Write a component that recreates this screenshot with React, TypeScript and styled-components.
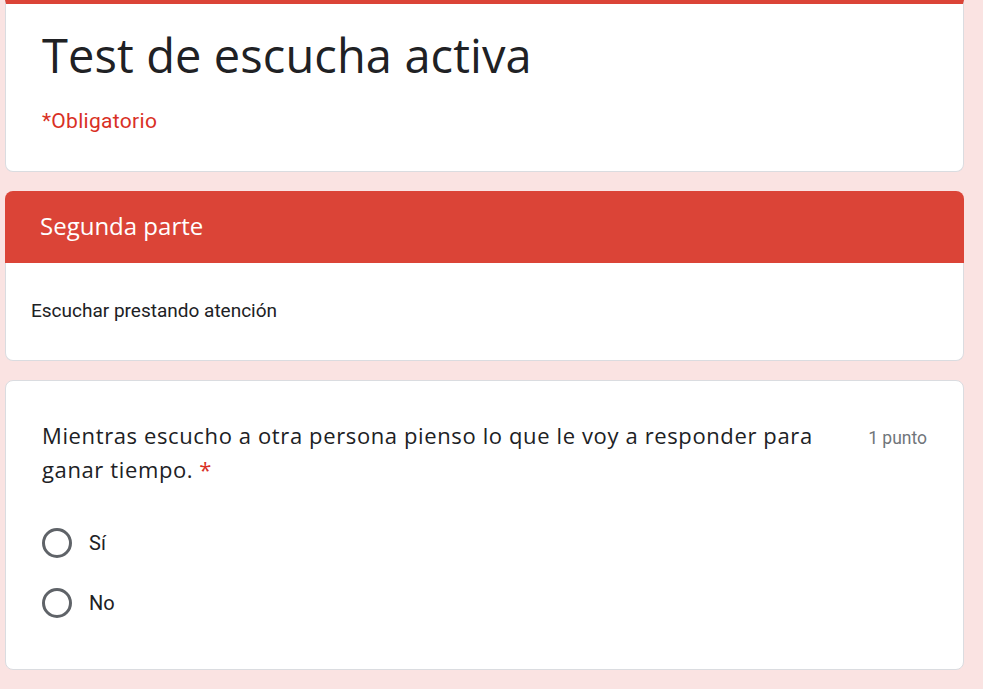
import React from "react";
import styled, { createGlobalStyle } from "styled-components";

const GlobalStyle = createGlobalStyle`
  html, body {
    margin: 0;
    padding: 0;
    background: #fae3e2;
  }
  body {
    font-family: Roboto, "Liberation Sans", sans-serif;
    color: #202124;
  }
`;

const Page = styled.div`
  display: flex;
  flex-direction: column;
  gap: 19px;
  width: 959px;
  padding: 0 0 20px 5px;
`;

const Card = styled.div<{ $top?: boolean }>`
  background: #fff;
  border: 1px solid #dadce0;
  border-top: ${(p) => (p.$top ? "4px solid #db4437" : "1px solid #dadce0")};
  border-radius: ${(p) => (p.$top ? "0 0 8px 8px" : "8px")};
  display: flex;
  flex-direction: column;
`;

const TitleCard = styled(Card)`
  padding: 23px 36px 36px 36px;
`;

const Title = styled.h1`
  margin: 0;
  font-family: "Open Sans", sans-serif;
  font-weight: 400;
  font-size: 47px;
  line-height: 56px;
  letter-spacing: 0.1px;
  color: #202124;
`;

const Required = styled.div`
  margin-top: 24px;
  font-family: Roboto, sans-serif;
  font-size: 21px;
  line-height: 28px;
  letter-spacing: 0.3px;
  color: #d93025;
`;

const SectionCard = styled.div`
  display: flex;
  flex-direction: column;
`;

const SectionHeader = styled.div`
  background: #db4437;
  border-radius: 8px 8px 0 0;
  padding: 20px 34px 22px 35px;
  font-family: "Open Sans", sans-serif;
  font-size: 24px;
  line-height: 30px;
  color: #fff;
`;

const SectionBody = styled.div`
  background: #fff;
  border: 1px solid #dadce0;
  border-top: none;
  border-radius: 0 0 8px 8px;
  padding: 36px 25px 37px 25px;
  font-family: Roboto, sans-serif;
  font-size: 19px;
  line-height: 24px;
  color: #202124;
`;

const QuestionCard = styled(Card)`
  padding: 37px 36px 36px 36px;
`;

const QuestionHead = styled.div`
  display: flex;
  align-items: baseline;
  gap: 24px;
`;

const QuestionText = styled.div`
  flex: 1;
  font-family: "Open Sans", sans-serif;
  font-size: 22px;
  line-height: 34px;
  letter-spacing: 0.62px;
  color: #202124;
`;

const Asterisk = styled.span`
  color: #d93025;
  margin-left: 6px;
`;

const Points = styled.div`
  flex: none;
  font-family: Roboto, sans-serif;
  font-size: 17.5px;
  color: #70757a;
`;

const Options = styled.div`
  margin-top: 27px;
  display: flex;
  flex-direction: column;
`;

const Option = styled.label`
  display: flex;
  align-items: center;
  gap: 17px;
  height: 60px;
  cursor: pointer;
`;

const Radio = styled.span`
  box-sizing: border-box;
  width: 30px;
  height: 30px;
  border-radius: 50%;
  border: 3px solid #5f6368;
  flex: none;
`;

const OptionLabel = styled.span`
  font-family: Roboto, sans-serif;
  font-size: 20px;
  color: #202124;
`;

export default function App() {
  const options = ["Sí", "No"];
  return (
    <>
      <GlobalStyle />
      <Page>
        <TitleCard $top>
          <Title>Test de escucha activa</Title>
          <Required>*Obligatorio</Required>
        </TitleCard>

        <SectionCard>
          <SectionHeader>Segunda parte</SectionHeader>
          <SectionBody>Escuchar prestando atención</SectionBody>
        </SectionCard>

        <QuestionCard>
          <QuestionHead>
            <QuestionText>
              Mientras escucho a otra persona pienso lo que le voy a responder para
              ganar tiempo.<Asterisk>*</Asterisk>
            </QuestionText>
            <Points>1 punto</Points>
          </QuestionHead>
          <Options>
            {options.map((o) => (
              <Option key={o}>
                <Radio />
                <OptionLabel>{o}</OptionLabel>
              </Option>
            ))}
          </Options>
        </QuestionCard>
      </Page>
    </>
  );
}
